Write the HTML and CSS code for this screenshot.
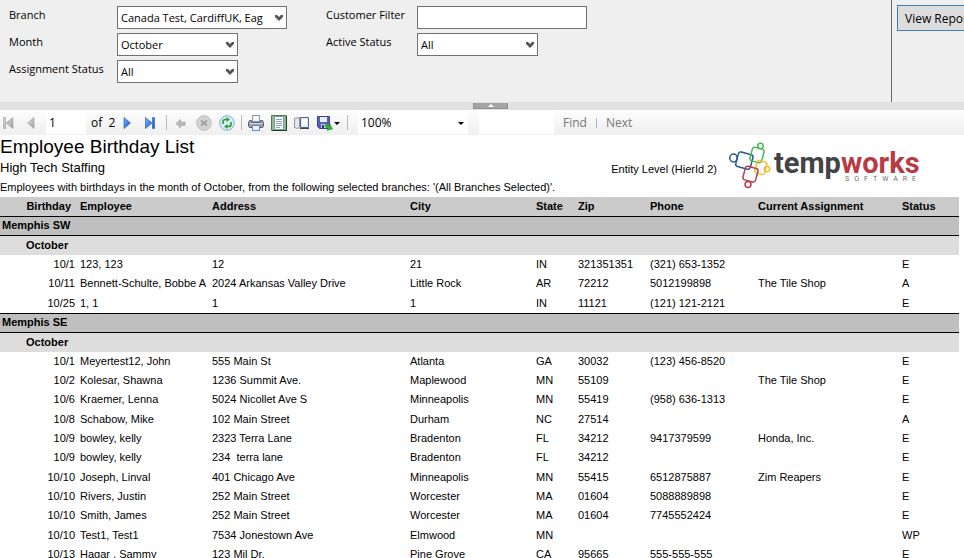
FILE: index.html
```html
<!DOCTYPE html>
<html lang="en">
<head>
  <meta charset="UTF-8">
  <meta name="viewport" content="width=device-width, initial-scale=1.0">
  <title>Employee Birthday List</title>
  <link rel="stylesheet" href="styles.css">
</head>
<body>

  <form class="params">
    <div class="fields">
      <label for="branch">Branch</label>
      <div class="select wide">
        <select id="branch"><option>Canada Test, CardiffUK, Eag</option></select>
        <svg class="chevron" viewBox="0 0 8 7"><path d="M0 1h2l2 2 2-2h2v2L4 7 0 3z"/></svg>
      </div>
      <label for="customer">Customer Filter</label>
      <input id="customer" class="wide" type="text">

      <label for="month">Month</label>
      <div class="select">
        <select id="month"><option>October</option></select>
        <svg class="chevron" viewBox="0 0 8 7"><path d="M0 1h2l2 2 2-2h2v2L4 7 0 3z"/></svg>
      </div>
      <label for="active">Active Status</label>
      <div class="select">
        <select id="active"><option>All</option></select>
        <svg class="chevron" viewBox="0 0 8 7"><path d="M0 1h2l2 2 2-2h2v2L4 7 0 3z"/></svg>
      </div>

      <label for="assignment">Assignment Status</label>
      <div class="select">
        <select id="assignment"><option>All</option></select>
        <svg class="chevron" viewBox="0 0 8 7"><path d="M0 1h2l2 2 2-2h2v2L4 7 0 3z"/></svg>
      </div>
    </div>
    <div class="submit">
      <button type="button" class="view-report">View Report</button>
    </div>
  </form>

  <div class="splitter">
    <button type="button" aria-label="Hide parameters"><svg width="6" height="3" viewBox="0 0 6 3"><path d="M3 0l3 3H0z" fill="#fff"/></svg></button>
  </div>

  <div class="toolbar">
    <svg class="defs" width="0" height="0">
      <defs>
        <linearGradient id="blue" x1="0" y1="0" x2="1" y2="1"><stop offset="0" stop-color="#7db4f5"/><stop offset="1" stop-color="#1650c8"/></linearGradient>
        <linearGradient id="gray" x1="0" y1="0" x2="1" y2="1"><stop offset="0" stop-color="#dcdcdc"/><stop offset="1" stop-color="#a2a2a2"/></linearGradient>
      </defs>
    </svg>
    <div class="group nav">
      <button type="button" aria-label="First page"><svg viewBox="0 0 16 16"><path d="M3.5 2.500h2v11h-2zM13 2.500v11L6 8z" fill="url(#gray)" stroke="#a5a5a5" stroke-width=".7"/></svg></button>
      <button type="button" aria-label="Previous page"><svg viewBox="0 0 16 16"><path d="M11 2.500v11L4.500 8z" fill="url(#gray)" stroke="#a5a5a5" stroke-width=".7"/></svg></button>
      <div class="page">
        <input type="text" value="1" aria-label="Current page">
        <span>of&nbsp; 2</span>
      </div>
      <button type="button" aria-label="Next page"><svg viewBox="0 0 16 16"><path d="M5 2.500v11L11.500 8z" fill="url(#blue)" stroke="#2a62cf" stroke-width=".7"/></svg></button>
      <button type="button" aria-label="Last page"><svg viewBox="0 0 16 16"><path d="M3.500 2.500v11L10 8zM10.500 2.500h2v11h-2z" fill="url(#blue)" stroke="#2a62cf" stroke-width=".7"/></svg></button>
    </div>
    <span class="sep"></span>
    <div class="group">
      <button type="button" aria-label="Back"><svg viewBox="0 0 16 16"><path d="M3 8.500l4.500-4V7H12v3.500H7.500V13z" fill="#b9b9b9" stroke="#a3a3a3" stroke-width=".7"/></svg></button>
      <button type="button" aria-label="Stop"><svg viewBox="0 0 16 16"><circle cx="8" cy="8" r="7.300" fill="#d3d3d3" stroke="#bcbcbc"/><path d="M5 5.500l6 5M11 5.500l-6 5" stroke="#a0a0a0" stroke-width="2"/></svg></button>
      <button type="button" aria-label="Refresh"><svg viewBox="0 0 16 16"><circle cx="8" cy="8" r="7.300" fill="#d9ecfb" stroke="#7fb0dc"/><path d="M4 9V6.500Q4 4.500 6.500 4.500H8M12 7v2.500q0 2-2.500 2H8" fill="none" stroke="#2ea32e" stroke-width="1.700"/><path d="M7.500 2l3.500 2.500L7.500 7zM8.500 9L5 11.500 8.500 14z" fill="#2ea32e"/></svg></button>
    </div>
    <span class="sep"></span>
    <div class="group">
      <button type="button" aria-label="Print"><svg viewBox="0 0 16 16"><path d="M4.500.5h7v6h-7z" fill="#f5f8fc" stroke="#8794a8"/><path d="M1.500 5.500h2v2h9v-2h2l1 2v4l-1 1h-13l-1-1v-4z" fill="#9a9da3" stroke="#5d6168"/><path d="M2 8.500h12" stroke="#dcdfe3"/><path d="M4.500 10.500h7v5h-7z" fill="#e8f2ff" stroke="#6889bd"/></svg></button>
      <button type="button" aria-label="Print layout"><svg viewBox="0 0 16 16"><path d="M.5.500h15v15H.500z" fill="#8fba93" stroke="#4b7d51"/><path d="M15.500 1v14.500H1" fill="none" stroke="#1e3b22"/><path d="M3.500 1.500h9v13h-9z" fill="#fff" stroke="#8399a0"/><path d="M5 4.500h6M5 6.500h6M5 8.500h6M5 10.500h6M5 12.500h4" stroke="#8aa3c6"/></svg></button>
      <button type="button" aria-label="Page setup"><svg viewBox="0 0 16 16"><path d="M.5 3.500l5-1v10l-2 1-3-1z" fill="#e4e8ee" stroke="#8d95a2"/><path d="M6.500 2.500h8v10h-8z" fill="#dceafb" stroke="#53647f"/><path d="M8 4h5v6H8z" fill="#fff"/><path d="M6 13.500h9" stroke="#37445a"/></svg></button>
      <button type="button" class="export" aria-label="Export"><svg viewBox="0 0 24 16"><path d="M.5 1.500h12v12h-10l-2-2z" fill="#5560c0" stroke="#3a4392"/><path d="M3 2h7v5H3z" fill="#e8edfb"/><path d="M4 9h6v4H4z" fill="#c9cbd8"/><path d="M5 10h2v3H5z" fill="#34378a"/><path d="M8.500 9l3 1.500 1.500-1.500 2.500 5-5.500 1.500 1-2-3-2z" fill="#2fb42f" stroke="#218a21" stroke-width=".5"/><path d="M17 7h6l-3 3z" fill="#000"/></svg></button>
    </div>
    <span class="sep"></span>
    <div class="select zoom">
      <select aria-label="Zoom"><option>100%</option></select>
      <svg class="caret" viewBox="0 0 6 3"><path d="M0 0h6L3 3z"/></svg>
    </div>
    <input class="search" type="text" aria-label="Find text">
    <a href="#">Find</a>
    <span class="bar"></span>
    <a href="#">Next</a>
  </div>

  <main class="report">
    <header>
      <div class="heading">
        <h1>Employee Birthday List</h1>
        <h2>High Tech Staffing</h2>
        <p>Employees with birthdays in the month of October, from the following selected branches: '(All Branches Selected)'.</p>
      </div>
      <span class="entity">Entity Level (HierId 2)</span>
      <svg class="logo" viewBox="0 0 192 48">
        <g fill="none" stroke-width="1.500">
          <g stroke="#27598f"><rect x="8" y="11" width="15" height="15" rx="2.500" transform="rotate(15 15 18)"/><ellipse cx="4.500" cy="16" rx="3.700" ry="3.900"/></g>
          <g stroke="#45b955"><rect x="22" y="6" width="12" height="14" rx="2.500" transform="rotate(15 28 13)"/><circle cx="31.500" cy="4" r="2.800"/></g>
          <g stroke="#f3bd35"><rect x="27" y="19" width="10" height="13" rx="2.500" transform="rotate(15 32 25)"/><circle cx="38" cy="27" r="2.700"/></g>
          <g stroke="#bd3d48"><rect x="15" y="25" width="13" height="14" rx="2.500" transform="rotate(15 21 32)"/><circle cx="19" cy="42.500" r="3"/></g>
        </g>
        <text class="wordmark" x="45" y="31">temp<tspan>works</tspan></text>
        <text class="tagline" x="116" y="39">SOFTWARE</text>
      </svg>
    </header>

    <table>
      <colgroup>
        <col class="c-birthday"><col class="c-employee"><col class="c-address"><col class="c-city"><col class="c-state"><col class="c-zip"><col class="c-phone"><col class="c-assignment"><col>
      </colgroup>
      <thead>
        <tr><th>Birthday</th><th>Employee</th><th>Address</th><th>City</th><th>State</th><th>Zip</th><th>Phone</th><th>Current Assignment</th><th>Status</th></tr>
      </thead>
      <tbody>
        <tr class="branch"><th colspan="9">Memphis SW</th></tr>
        <tr class="month"><th colspan="9">October</th></tr>
        <tr><td>10/1</td><td>123, 123</td><td>12</td><td>21</td><td>IN</td><td>321351351</td><td>(321) 653-1352</td><td></td><td>E</td></tr>
        <tr><td>10/11</td><td>Bennett-Schulte, Bobbe A</td><td>2024 Arkansas Valley Drive</td><td>Little Rock</td><td>AR</td><td>72212</td><td>5012199898</td><td>The Tile Shop</td><td>A</td></tr>
        <tr><td>10/25</td><td>1, 1</td><td>1</td><td>1</td><td>IN</td><td>11121</td><td>(121) 121-2121</td><td></td><td>E</td></tr>
        <tr class="branch"><th colspan="9">Memphis SE</th></tr>
        <tr class="month"><th colspan="9">October</th></tr>
        <tr><td>10/1</td><td>Meyertest12, John</td><td>555 Main St</td><td>Atlanta</td><td>GA</td><td>30032</td><td>(123) 456-8520</td><td></td><td>E</td></tr>
        <tr><td>10/2</td><td>Kolesar, Shawna</td><td>1236 Summit Ave.</td><td>Maplewood</td><td>MN</td><td>55109</td><td></td><td>The Tile Shop</td><td>E</td></tr>
        <tr><td>10/6</td><td>Kraemer, Lenna</td><td>5024 Nicollet Ave S</td><td>Minneapolis</td><td>MN</td><td>55419</td><td>(958) 636-1313</td><td></td><td>E</td></tr>
        <tr><td>10/8</td><td>Schabow, Mike</td><td>102 Main Street</td><td>Durham</td><td>NC</td><td>27514</td><td></td><td></td><td>A</td></tr>
        <tr><td>10/9</td><td>bowley, kelly</td><td>2323 Terra Lane</td><td>Bradenton</td><td>FL</td><td>34212</td><td>9417379599</td><td>Honda, Inc.</td><td>E</td></tr>
        <tr><td>10/9</td><td>bowley, kelly</td><td>234  terra lane</td><td>Bradenton</td><td>FL</td><td>34212</td><td></td><td></td><td>E</td></tr>
        <tr><td>10/10</td><td>Joseph, Linval</td><td>401 Chicago Ave</td><td>Minneapolis</td><td>MN</td><td>55415</td><td>6512875887</td><td>Zim Reapers</td><td>E</td></tr>
        <tr><td>10/10</td><td>Rivers, Justin</td><td>252 Main Street</td><td>Worcester</td><td>MA</td><td>01604</td><td>5088889898</td><td></td><td>E</td></tr>
        <tr><td>10/10</td><td>Smith, James</td><td>252 Main Street</td><td>Worcester</td><td>MA</td><td>01604</td><td>7745552424</td><td></td><td>E</td></tr>
        <tr><td>10/10</td><td>Test1, Test1</td><td>7534 Jonestown Ave</td><td>Elmwood</td><td>MN</td><td></td><td></td><td></td><td>WP</td></tr>
        <tr><td>10/13</td><td>Hagar , Sammy</td><td>123 Mil Dr.</td><td>Pine Grove</td><td>CA</td><td>95665</td><td>555-555-555</td><td></td><td>E</td></tr>
      </tbody>
    </table>
  </main>

</body>
</html>
```
FILE: styles.css
```css
* {
  box-sizing: border-box;
}

body {
  margin: 0;
  background: #fff;
  color: #000;
  font-family: "Open Sans", "Noto Sans", sans-serif;
  font-size: 12px;
  overflow-x: hidden;
}

button,
input,
select {
  font: inherit;
  color: inherit;
  margin: 0;
}

/* Parameters */
.params {
  display: flex;
  background: #efefef;
  overflow: hidden;
}

.fields {
  flex: 1;
  display: grid;
  grid-template-columns: 108px 209px 91px 1fr;
  grid-auto-rows: 23px;
  row-gap: 4px;
  padding: 6px 9px 19px;
  border-right: 1px solid #696969;
  font-size: 11px;
}

.fields label {
  line-height: 18px;
  white-space: nowrap;
}

.select {
  position: relative;
  width: 121px;
  height: 23px;
}

.select select,
.fields input {
  appearance: none;
  width: 100%;
  height: 23px;
  padding: 0 3px;
  border: 1px solid #707070;
  border-radius: 0;
  background: #fff;
}

.fields .wide {
  width: 170px;
}

.chevron {
  position: absolute;
  top: 8px;
  right: 4px;
  width: 8px;
  height: 7px;
  fill: #555;
}

.submit {
  width: 72px;
  padding: 5px;
}

.view-report {
  width: 84px;
  height: 26px;
  padding: 0 7px;
  border: 1px solid #3c7fb1;
  background: #ddd;
  text-align: left;
  white-space: nowrap;
}

.splitter {
  display: flex;
  justify-content: center;
  height: 8px;
  padding: 1px 0 1px 17px;
  background: #e1e1e1;
}

.splitter button {
  display: flex;
  justify-content: center;
  align-items: center;
  width: 35px;
  padding: 0;
  border: 1px solid #8f8f8f;
  border-top: 0;
  background: #a5a5a5;
}

/* Toolbar */
.toolbar {
  display: flex;
  align-items: center;
  height: 25px;
  background: linear-gradient(#fdfdfd, #efefef);
}

.defs {
  position: absolute;
}

.group {
  display: flex;
  align-items: center;
  gap: 7px;
}

.nav {
  padding-right: 2px;
}

.group button {
  width: 16px;
  height: 16px;
  padding: 0;
  border: 0;
  background: none;
}

.group svg {
  display: block;
  width: 100%;
  height: 16px;
}

.group .export {
  width: 24px;
}

.page {
  display: flex;
  align-items: center;
  gap: 5px;
  width: 66px;
  white-space: nowrap;
}

.page input {
  flex: none;
  width: 40px;
  height: 22px;
  padding: 0 3px;
  border: 0;
  background: #fff;
}

.sep {
  width: 1px;
  height: 15px;
  margin: 0 6px;
  background: #bcbcbc;
}

.zoom {
  width: 110px;
  margin-left: 4px;
}

.zoom select {
  border: 0;
}

.caret {
  position: absolute;
  top: 11px;
  right: 4px;
  width: 6px;
  height: 3px;
}

.search {
  width: 75px;
  height: 23px;
  margin: 0 9px 0 11px;
  border: 0;
  background: #fff;
}

.toolbar a {
  color: #767676;
  text-decoration: none;
}

.bar {
  width: 1px;
  height: 10px;
  margin: 0 9px;
  background: #b5b5b5;
}

/* Report */
.report {
  padding-right: 5px;
  font-family: "Liberation Sans", Arial, sans-serif;
  font-size: 11px;
}

.report header {
  display: flex;
  align-items: center;
  padding-right: 38px;
}

.heading {
  flex: 1;
  white-space: nowrap;
}

h1,
h2,
.heading p {
  margin: 0;
  font-weight: normal;
}

h1 {
  font-size: 19px;
  line-height: 24px;
}

h2 {
  font-size: 13px;
  line-height: 18px;
}

.heading p {
  line-height: 20px;
}

.entity {
  margin-right: 12px;
  padding-top: 6px;
}

.logo {
  width: 192px;
  height: 48px;
  overflow: visible;
}

.wordmark {
  font: bold 29px Roboto, sans-serif;
  fill: #434345;
}

.wordmark tspan {
  fill: #b83a42;
}

.tagline {
  font: 7px Roboto, sans-serif;
  letter-spacing: 5px;
  fill: #6c6c6c;
}

table {
  width: 100%;
  table-layout: fixed;
  border-spacing: 0;
}

.c-birthday { width: 78px; }
.c-employee { width: 132px; }
.c-address { width: 198px; }
.c-city { width: 126px; }
.c-state { width: 42px; }
.c-zip { width: 72px; }
.c-phone { width: 108px; }
.c-assignment { width: 144px; }

th,
td {
  height: 19px;
  padding: 0 2px;
  line-height: 19px;
  text-align: left;
  vertical-align: top;
  white-space: pre;
}

/* every third row takes the spare pixel */
tr:nth-child(3n + 1) td {
  height: 20px;
}

td:first-child {
  padding-right: 3px;
  text-align: right;
}

thead th {
  background: #cbcbcb;
}

thead th:first-child {
  padding-right: 7px;
  text-align: right;
}

.branch th {
  height: 20px;
  line-height: 17px;
  background: #bfbfbf;
  border-top: 1px solid #000;
  border-bottom: 1px solid #000;
}

.month th {
  padding-left: 26px;
  background: #ddd;
}
```
